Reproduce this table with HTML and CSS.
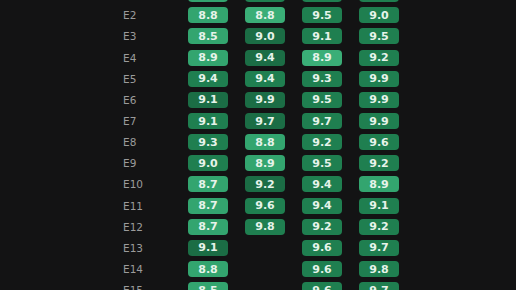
FILE: index.html
```html
<!DOCTYPE html>
<html>
<head>
<meta charset="utf-8">
<link rel="stylesheet" href="styles.css">
</head>
<body>
<div class="grid">
  <div class="lbl">E1</div><div class="cell"><span class="b l">8.9</span></div><div class="cell"><span class="b m">9.3</span></div><div class="cell"><span class="b m">9.4</span></div><div class="cell"><span class="b m">9.3</span></div>
  <div class="lbl">E2</div><div class="cell"><span class="b l">8.8</span></div><div class="cell"><span class="b ll">8.8</span></div><div class="cell"><span class="b m">9.5</span></div><div class="cell"><span class="b m">9.0</span></div>
  <div class="lbl">E3</div><div class="cell"><span class="b l">8.5</span></div><div class="cell"><span class="b d">9.0</span></div><div class="cell"><span class="b m">9.1</span></div><div class="cell"><span class="b m">9.5</span></div>
  <div class="lbl">E4</div><div class="cell"><span class="b l">8.9</span></div><div class="cell"><span class="b d">9.4</span></div><div class="cell"><span class="b ll">8.9</span></div><div class="cell"><span class="b m">9.2</span></div>
  <div class="lbl">E5</div><div class="cell"><span class="b m">9.4</span></div><div class="cell"><span class="b m">9.4</span></div><div class="cell"><span class="b m">9.3</span></div><div class="cell"><span class="b m">9.9</span></div>
  <div class="lbl">E6</div><div class="cell"><span class="b d">9.1</span></div><div class="cell"><span class="b d">9.9</span></div><div class="cell"><span class="b m">9.5</span></div><div class="cell"><span class="b m">9.9</span></div>
  <div class="lbl">E7</div><div class="cell"><span class="b m">9.1</span></div><div class="cell"><span class="b d">9.7</span></div><div class="cell"><span class="b m">9.7</span></div><div class="cell"><span class="b m">9.9</span></div>
  <div class="lbl">E8</div><div class="cell"><span class="b m">9.3</span></div><div class="cell"><span class="b l">8.8</span></div><div class="cell"><span class="b m">9.2</span></div><div class="cell"><span class="b m">9.6</span></div>
  <div class="lbl">E9</div><div class="cell"><span class="b m">9.0</span></div><div class="cell"><span class="b l">8.9</span></div><div class="cell"><span class="b m">9.5</span></div><div class="cell"><span class="b m">9.2</span></div>
  <div class="lbl">E10</div><div class="cell"><span class="b l">8.7</span></div><div class="cell"><span class="b d">9.2</span></div><div class="cell"><span class="b m">9.4</span></div><div class="cell"><span class="b l">8.9</span></div>
  <div class="lbl">E11</div><div class="cell"><span class="b l">8.7</span></div><div class="cell"><span class="b m">9.6</span></div><div class="cell"><span class="b m">9.4</span></div><div class="cell"><span class="b m">9.1</span></div>
  <div class="lbl">E12</div><div class="cell"><span class="b l">8.7</span></div><div class="cell"><span class="b m">9.8</span></div><div class="cell"><span class="b m">9.2</span></div><div class="cell"><span class="b m">9.2</span></div>
  <div class="lbl">E13</div><div class="cell"><span class="b d">9.1</span></div><div class="cell"></div><div class="cell"><span class="b m">9.6</span></div><div class="cell"><span class="b m">9.7</span></div>
  <div class="lbl">E14</div><div class="cell"><span class="b l">8.8</span></div><div class="cell"></div><div class="cell"><span class="b m">9.6</span></div><div class="cell"><span class="b m">9.8</span></div>
  <div class="lbl">E15</div><div class="cell"><span class="b l">8.5</span></div><div class="cell"></div><div class="cell"><span class="b m">9.6</span></div><div class="cell"><span class="b m">9.7</span></div>
</div>
</body>
</html>
```
FILE: styles.css
```css
html, body {
  margin: 0;
  padding: 0;
  background: #131314;
  height: 100%;
  overflow: hidden;
}
.grid {
  display: grid;
  grid-template-columns: 65px 57px 57px 57px 40px;
  grid-auto-rows: 21.15px;
  padding-left: 123px;
  margin-top: -16.4px;
  font-family: "DejaVu Sans", sans-serif;
}
.lbl {
  display: flex;
  align-items: center;
  font-size: 10.5px;
  color: #9b9b9b;
}
.cell {
  display: flex;
  align-items: center;
}
.b {
  width: 40px;
  height: 16px;
  border-radius: 4px;
  display: flex;
  align-items: center;
  justify-content: center;
  font-size: 11px;
  font-weight: bold;
  color: #e6f3ea;
}
.ll { background: #3aae77; }
.l { background: #33a56f; }
.m { background: #1f7f50; }
.d { background: #1b6d45; }
```
